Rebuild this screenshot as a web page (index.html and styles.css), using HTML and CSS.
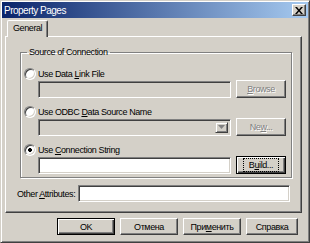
FILE: index.html
```html
<!DOCTYPE html>
<html>
<head>
<meta charset="utf-8">
<link rel="stylesheet" href="styles.css">
</head>
<body>
<div class="window">
  <div class="titlebar">
    <span class="title">Property Pages</span>
    <span class="close"><svg width="8" height="7" viewBox="0 0 8 7"><path d="M0 0h2l2 2.5L6 0h2L5 3.5 8 7H6L4 4.5 2 7H0l3-3.5z" fill="#000"/></svg></span>
  </div>
  <div class="tabs">
    <div class="tab">General</div>
  </div>
  <div class="panel">
    <fieldset class="group">
      <legend>Source of Connection</legend>
      <div class="opt"><span class="radio"></span><span>Use Data <u>L</u>ink File</span></div>
      <div class="editrow">
        <div class="edit disabled"></div>
        <div class="btn disabled"><span><u>B</u>rowse</span></div>
      </div>
      <div class="opt gap"><span class="radio"></span><span>Use ODBC <u>D</u>ata Source Name</span></div>
      <div class="editrow">
        <div class="edit disabled combo"><span class="drop"><svg width="7" height="4" viewBox="0 0 7 4"><path d="M0 0h7L3.5 4z" fill="#808080"/></svg></span></div>
        <div class="btn disabled"><span>Ne<u>w</u>...</span></div>
      </div>
      <div class="opt gap"><span class="radio on"></span><span>Use <u>C</u>onnection String</span></div>
      <div class="editrow">
        <div class="edit"></div>
        <div class="btn default"><span class="focus">B<u>u</u>ild...</span></div>
      </div>
    </fieldset>
    <div class="attrrow">
      <span class="attrlabel">Other <u>A</u>ttributes:</span>
      <div class="edit wide"></div>
    </div>
  </div>
  <div class="buttons">
    <div class="btn big default"><span>OK</span></div>
    <div class="btn big"><span>Отмена</span></div>
    <div class="btn big"><span>При<u>м</u>енить</span></div>
    <div class="btn big"><span>Справка</span></div>
  </div>
</div>
</body>
</html>
```

FILE: styles.css
```css
html, body {
  margin: 0;
  padding: 0;
  background: #d4d0c8;
}
body {
  font-family: "Liberation Sans", Arial, sans-serif;
  font-size: 9px;
  letter-spacing: -0.4px;
  color: #000;
}
u { text-decoration: underline; text-underline-offset: 1px; }
.window {
  width: 310px;
  height: 243px;
  box-sizing: border-box;
  border: 1px solid;
  border-color: #d4d0c8 #404040 #404040 #d4d0c8;
  box-shadow: inset 1px 1px #fff, inset -1px -1px #808080;
  padding: 1px;
  background: #d4d0c8;
  display: flex;
  flex-direction: column;
}
.titlebar {
  height: 16px;
  background: linear-gradient(to right, #0a246a, #a6caf0);
  display: flex;
  align-items: center;
  justify-content: space-between;
  padding: 0 2px 0 2px;
}
.title {
  color: #fff;
  font-size: 10px;
  letter-spacing: -0.5px;
}
.close {
  width: 14px;
  height: 12px;
  box-sizing: border-box;
  background: #d4d0c8;
  border: 1px solid;
  border-color: #fff #404040 #404040 #fff;
  box-shadow: inset -1px -1px #808080;
  display: flex;
  align-items: center;
  justify-content: center;
}
.tabs {
  display: flex;
  margin: 2px 0 0 5px;
  height: 16px;
}
.tab {
  position: relative;
  z-index: 1;
  width: 41px;
  height: 17px;
  box-sizing: border-box;
  background: #d4d0c8;
  border-left: 1px solid #fff;
  border-top: 1px solid #fff;
  border-right: 1px solid #404040;
  box-shadow: inset -1px 0 #808080;
  border-radius: 2px 2px 0 0;
  padding: 2px 0 0 5px;
}
.panel {
  margin: 0 6px 0 3px;
  height: 177px;
  box-sizing: border-box;
  border: 1px solid;
  border-color: #fff #404040 #404040 #fff;
  box-shadow: inset -1px -1px #808080;
  padding: 9px 10px 0 14px;
}
.group {
  margin: 0;
  padding: 0 5px 0 3px;
  height: 132px;
  box-sizing: border-box;
  border: 1px solid #808080;
  box-shadow: 1px 1px #fff, inset 1px 1px #fff;
}
.group legend {
  padding: 0 2px;
  margin-left: 3px;
  line-height: 13px;
}
.opt {
  display: flex;
  align-items: center;
  height: 12px;
  margin-top: 9px;
  gap: 2px;
}
.opt.gap { margin-top: 8px; }
.radio {
  width: 12px;
  height: 12px;
  box-sizing: border-box;
  border-radius: 50%;
  border: 1px solid;
  border-color: #808080 #fff #fff #808080;
  box-shadow: inset 1px 1px #404040, inset -1px -1px #d4d0c8;
  background: #fff;
}
.radio.on {
  background: radial-gradient(circle, #000 1.6px, #fff 2.2px);
}
.editrow {
  display: flex;
  align-items: center;
  gap: 5px;
  margin-left: 14px;
  height: 18px;
}
.edit {
  width: 193px;
  height: 17px;
  box-sizing: border-box;
  background: #fff;
  border: 1px solid;
  border-color: #808080 #fff #fff #808080;
  box-shadow: inset 1px 1px #404040, inset -1px -1px #d4d0c8;
}
.edit.disabled { background: #d4d0c8; }
.edit.combo {
  display: flex;
  justify-content: flex-end;
  padding: 2px;
}
.drop {
  width: 13px;
  height: 11px;
  box-sizing: border-box;
  background: #d4d0c8;
  border: 1px solid;
  border-color: #d4d0c8 #404040 #404040 #d4d0c8;
  box-shadow: inset 1px 1px #fff, inset -1px -1px #808080;
  display: flex;
  align-items: center;
  justify-content: center;
}
.btn {
  width: 50px;
  height: 18px;
  box-sizing: border-box;
  background: #d4d0c8;
  border: 1px solid;
  border-color: #fff #404040 #404040 #fff;
  box-shadow: inset -1px -1px #808080;
  display: flex;
  align-items: center;
  justify-content: center;
}
.btn.disabled {
  color: #808080;
  text-shadow: 1px 1px #fff;
}
.btn.default {
  border: 1px solid #000;
  box-shadow: inset 1px 1px #fff, inset -1px -1px #404040, inset -2px -2px #808080;
}
.focus {
  outline: 1px dotted #000;
  outline-offset: 1px;
  padding: 0 4px;
}
.attrrow {
  display: flex;
  align-items: center;
  gap: 3px;
  margin: 7px 0 0 -3px;
  height: 17px;
}
.attrlabel {
  white-space: nowrap;
  flex: none;
}
.edit.wide {
  flex: 1;
  width: auto;
  margin-right: 1px;
}
.buttons {
  display: flex;
  gap: 5px;
  margin: 5px 0 0 55px;
}
.btn.big {
  width: 58px;
  height: 17px;
}
.buttons .btn:last-child { width: 52px; }
```
